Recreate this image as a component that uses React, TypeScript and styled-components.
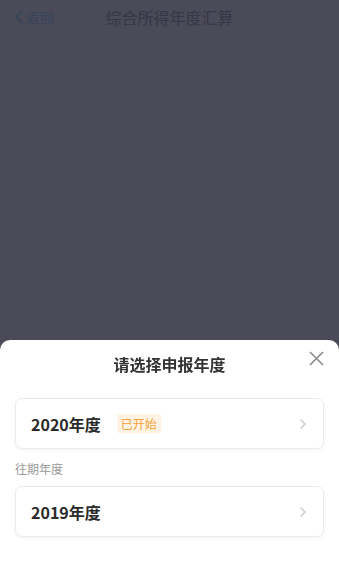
import React from 'react';
import styled, { createGlobalStyle } from 'styled-components';

type Year = {
    id: string;
    label: string;
    badge?: string;
};

const current: Year = { id: '2020', label: '2020年度', badge: '已开始' };
const past: Year[] = [{ id: '2019', label: '2019年度' }];

const App = () => (
    <>
        <GlobalStyle />
        <Page>
            <Header>
                <BackLink>
                    <svg width="10" height="14" viewBox="0 0 10 14">
                        <path d="M8 1 L2 7 L8 13" fill="none" stroke="currentColor" strokeWidth="1.8" />
                    </svg>
                    返回
                </BackLink>
                <HeaderTitle>综合所得年度汇算</HeaderTitle>
            </Header>
        </Page>
        <Mask />
        <Sheet>
            <SheetHeader>
                <SheetTitle>请选择申报年度</SheetTitle>
                <CloseBtn aria-label="close">
                    <svg width="15" height="15" viewBox="0 0 15 15">
                        <path d="M1 1 L14 14 M14 1 L1 14" stroke="currentColor" strokeWidth="1.6" />
                    </svg>
                </CloseBtn>
            </SheetHeader>
            <YearCard year={current} />
            <SectionLabel>往期年度</SectionLabel>
            {past.map(y => <YearCard key={y.id} year={y} />)}
        </Sheet>
    </>
);

const YearCard = ({ year }: { year: Year }) => (
    <Card>
        <YearLabel>{year.label}</YearLabel>
        {year.badge && <Badge>{year.badge}</Badge>}
        <Chevron width="8" height="12" viewBox="0 0 8 12">
            <path d="M1.5 1.5 L6 6 L1.5 10.5" fill="none" stroke="currentColor" strokeWidth="1.3" />
        </Chevron>
    </Card>
);

const GlobalStyle = createGlobalStyle`
    html, body {
        margin: 0;
        padding: 0;
        height: 100%;
        background: #4a4a58;
        font-family: 'Noto Sans CJK SC', 'Noto Sans', sans-serif;
    }
`;

const Page = styled.div`
    height: 578px;
    background: #4a4a58;
`;

const Header = styled.div`
    height: 34px;
    display: flex;
    align-items: center;
    position: relative;
    padding: 0 14px;
`;

const BackLink = styled.div`
    display: flex;
    align-items: center;
    gap: 2px;
    font-size: 14px;
    color: #37445a;
`;

const HeaderTitle = styled.div`
    position: absolute;
    left: 0;
    right: 0;
    text-align: center;
    font-size: 16px;
    color: #363646;
    pointer-events: none;
`;

const Mask = styled.div`
    position: fixed;
    inset: 0;
    background: transparent;
`;

const Sheet = styled.div`
    position: fixed;
    left: 0;
    right: 0;
    bottom: 0;
    height: 238px;
    background: #ffffff;
    border-radius: 10px 10px 0 0;
    padding: 0 15px;
    box-sizing: border-box;
`;

const SheetHeader = styled.div`
    height: 48px;
    display: flex;
    align-items: center;
    justify-content: center;
    position: relative;
    margin-bottom: 10px;
`;

const SheetTitle = styled.div`
    font-size: 16px;
    font-weight: 700;
    color: #333333;
`;

const CloseBtn = styled.button`
    position: absolute;
    right: -4px;
    top: 7px;
    background: none;
    border: none;
    padding: 4px;
    color: #8a8a8a;
    line-height: 0;
`;

const Card = styled.div`
    height: 51px;
    display: flex;
    align-items: center;
    padding: 0 16px 0 15px;
    border: 1px solid #ebebeb;
    border-radius: 7px;
    box-shadow: 0 1px 3px rgba(0, 0, 0, 0.06);
    box-sizing: border-box;
`;

const YearLabel = styled.div`
    font-size: 16px;
    font-weight: 700;
    color: #2b2b2b;
`;

const Badge = styled.div`
    margin-left: 16px;
    padding: 1px 4px;
    font-size: 12px;
    color: #f3a13a;
    background: #fff4e3;
    border-radius: 2px;
`;

const Chevron = styled.svg`
    margin-left: auto;
    color: #c6c6c6;
`;

const SectionLabel = styled.div`
    font-size: 12px;
    color: #999999;
    padding: 11px 0 9px;
    line-height: 17px;
`;

export default App;
